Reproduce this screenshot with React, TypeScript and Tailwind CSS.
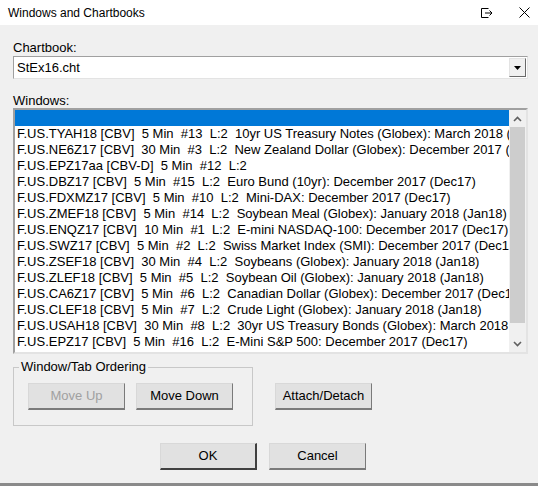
import React from 'react';

const rows = [
  'F.US.TYAH18 [CBV]  5 Min  #13  L:2  10yr US Treasury Notes (Globex): March 2018 (Mar18)',
  'F.US.NE6Z17 [CBV]  30 Min  #3  L:2  New Zealand Dollar (Globex): December 2017 (Dec17)',
  'F.US.EPZ17aa [CBV-D]  5 Min  #12  L:2',
  'F.US.DBZ17 [CBV]  5 Min  #15  L:2  Euro Bund (10yr): December 2017 (Dec17)',
  'F.US.FDXMZ17 [CBV]  5 Min  #10  L:2  Mini-DAX: December 2017 (Dec17)',
  'F.US.ZMEF18 [CBV]  5 Min  #14  L:2  Soybean Meal (Globex): January 2018 (Jan18)',
  'F.US.ENQZ17 [CBV]  10 Min  #1  L:2  E-mini NASDAQ-100: December 2017 (Dec17)',
  'F.US.SWZ17 [CBV]  5 Min  #2  L:2  Swiss Market Index (SMI): December 2017 (Dec17)',
  'F.US.ZSEF18 [CBV]  30 Min  #4  L:2  Soybeans (Globex): January 2018 (Jan18)',
  'F.US.ZLEF18 [CBV]  5 Min  #5  L:2  Soybean Oil (Globex): January 2018 (Jan18)',
  'F.US.CA6Z17 [CBV]  5 Min  #6  L:2  Canadian Dollar (Globex): December 2017 (Dec17)',
  'F.US.CLEF18 [CBV]  5 Min  #7  L:2  Crude Light (Globex): January 2018 (Jan18)',
  'F.US.USAH18 [CBV]  30 Min  #8  L:2  30yr US Treasury Bonds (Globex): March 2018 (Mar18)',
  'F.US.EPZ17 [CBV]  5 Min  #16  L:2  E-Mini S&P 500: December 2017 (Dec17)',
];

function Button({ label, disabled, primary, className = '' }: { label: string; disabled?: boolean; primary?: boolean; className?: string }) {
  return (
    <div
      className={
        'w-[97px] h-[27px] flex items-center justify-center bg-[#e1e1e1] border border-t-[#d8d8d8] border-l-[#d8d8d8] ' +
        (primary
          ? 'border-r-[#404040] border-b-[#404040] border-b-2 border-r-2 '
          : 'border-r-[#7a7a7a] border-b-[#7a7a7a] border-b-2 ') +
        (disabled ? 'text-[#a0a0a0] ' : 'text-black ') +
        className
      }
    >
      {label}
    </div>
  );
}

export default function App() {
  return (
    <div
      className="w-[538px] h-[486px] flex flex-col bg-[#f0f0f0] text-[13px] text-black overflow-hidden"
      style={{ fontFamily: '"Liberation Sans", Arial, sans-serif' }}
    >
      {/* Title bar */}
      <div className="h-[25px] bg-white flex items-center pl-[8px] shrink-0">
        <span className="text-[12px] flex-1">Windows and Chartbooks</span>
        <svg width="12" height="10" viewBox="0 0 12 10" className="mr-[26px]" fill="none" stroke="#000" strokeWidth="1">
          <path d="M7.5 0.5H0.5V9.5H7.5M4 5H11M8.5 2.5L11 5L8.5 7.5" />
        </svg>
        <svg width="11" height="11" viewBox="0 0 11 11" className="mr-[8px]" stroke="#000" strokeWidth="1">
          <path d="M0.5 0.5L10.5 10.5M10.5 0.5L0.5 10.5" />
        </svg>
      </div>

      {/* Body */}
      <div className="flex-1 flex flex-col pl-[13px] pr-[10px] pt-[15px]">
        <div className="leading-[15px]">Chartbook:</div>
        <div className="mt-[1px] h-[23px] bg-white border border-t-[#a0a0a0] border-l-[#a0a0a0] border-r-[#e3e3e3] border-b-[#e3e3e3] flex items-center pl-[3px] pr-[1px]">
          <span className="flex-1">StEx16.cht</span>
          <div className="w-[17px] h-[19px] bg-[#f0f0f0] border border-t-[#e3e3e3] border-l-[#e3e3e3] border-r-[#696969] border-b-[#696969] flex items-center justify-center">
            <svg width="7" height="4" viewBox="0 0 7 4">
              <path d="M0 0H7L3.5 4Z" fill="#000" />
            </svg>
          </div>
        </div>

        <div className="mt-[14px] leading-[15px]">Windows:</div>
        <div className="h-[246px] bg-white border-2 border-t-[#a0a0a0] border-l-[#a0a0a0] border-r-[#e3e3e3] border-b-[#e3e3e3] flex overflow-hidden">
          <div className="flex-1 flex flex-col overflow-hidden">
            <div className="h-[16px] bg-[#0078d7] shrink-0" />
            {rows.map((r) => (
              <div key={r} className="h-[16px] leading-[16px] whitespace-pre pl-[2px] shrink-0">
                {r}
              </div>
            ))}
          </div>
          <div className="w-[17px] flex flex-col bg-[#f0f0f0]">
            <div className="h-[17px] flex items-center justify-center">
              <svg width="9" height="6" viewBox="0 0 9 6" fill="none" stroke="#606060" strokeWidth="1.6">
                <path d="M1 5L4.5 1.5L8 5" />
              </svg>
            </div>
            <div className="mx-[1px] h-[196px] bg-[#cdcdcd]" />
            <div className="flex-1" />
            <div className="h-[17px] flex items-center justify-center">
              <svg width="9" height="6" viewBox="0 0 9 6" fill="none" stroke="#606060" strokeWidth="1.6">
                <path d="M1 1L4.5 4.5L8 1" />
              </svg>
            </div>
          </div>
        </div>

        {/* Group + attach */}
        <div className="mt-[7px] flex items-start">
          <div className="relative w-[240px] h-[59px] mt-[6px] border border-[#c8c8c8] flex items-start gap-[11px] pl-[14px] pt-[15px]">
            <span className="absolute left-[5px] top-[-9px] bg-[#f0f0f0] px-[2px] leading-[15px]">Window/Tab Ordering</span>
            <Button label="Move Up" disabled />
            <Button label="Move Down" />
          </div>
          <Button label="Attach/Detach" className="ml-[22px] mt-[22px]" />
        </div>

        <div className="mt-[17px] flex gap-[12px] pl-[147px]">
          <Button label="OK" primary />
          <Button label="Cancel" />
        </div>
      </div>
      <div className="h-[3px] bg-[#8a8a8a] shrink-0" />
    </div>
  );
}
